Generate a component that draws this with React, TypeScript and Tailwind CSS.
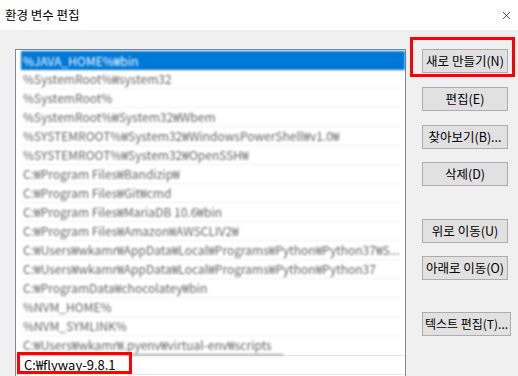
import { X } from "lucide-react";

const paths = [
  "%JAVA_HOME%₩bin",
  "%SystemRoot%₩system32",
  "%SystemRoot%",
  "%SystemRoot%₩System32₩Wbem",
  "%SYSTEMROOT%₩System32₩WindowsPowerShell₩v1.0₩",
  "%SYSTEMROOT%₩System32₩OpenSSH₩",
  "C:₩Program Files₩Bandizip₩",
  "C:₩Program Files₩Git₩cmd",
  "C:₩Program Files₩MariaDB 10.6₩bin",
  "C:₩Program Files₩Amazon₩AWSCLIV2₩",
  "C:₩Users₩wkamr₩AppData₩Local₩Programs₩Python₩Python37₩S...",
  "C:₩Users₩wkamr₩AppData₩Local₩Programs₩Python₩Python37",
  "C:₩ProgramData₩chocolatey₩bin",
  "%NVM_HOME%",
  "%NVM_SYMLINK%",
  "C:₩Users₩wkamr₩.pyenv₩virtual-env₩scripts",
];

const font = { fontFamily: '"Noto Sans CJK KR", "Noto Sans", sans-serif' };

const WinButton = ({ label, className = "" }: { label: string; className?: string }) => (
  <button
    className={`w-[86px] h-[24px] bg-[#e1e1e1] border border-[#adadad] text-[12.5px] text-black leading-none flex items-center justify-center whitespace-nowrap ${className}`}
  >
    {label}
  </button>
);

export default function App() {
  return (
    <div className="w-[518px] h-[376px] overflow-hidden flex flex-col bg-[#f0f0f0]" style={font}>
      {/* 제목 표시줄 */}
      <div className="h-[30px] bg-white flex items-center justify-between pl-[5px] pr-[5px] shrink-0">
        <span className="text-[12.5px] text-black">환경 변수 편집</span>
        <X className="w-[13px] h-[13px] text-black" strokeWidth={1.2} />
      </div>

      <div className="flex flex-1 pt-[19px] pl-[15px]">
        {/* 경로 목록 */}
        <div className="relative w-[391px] h-[340px] bg-white border border-[#828790] shrink-0 pl-[5px] pr-[4px] pt-[1px]">
          <div className="blur-[1px]">
            {paths.map((p, i) => (
              <div
                key={i}
                className={`h-[19px] flex items-center pl-[2px] text-[12px] whitespace-nowrap ${
                  i === 0
                    ? "bg-[#0078d7] text-white -mr-[4px]"
                    : "text-[#666] border-b border-[#f0f0f0]"
                } ${i === 15 ? "border-b border-dotted border-black w-[262px]" : ""}`}
              >
                {p}
              </div>
            ))}
          </div>
          <div className="h-[20px] -ml-[5px] -mr-[4px] border-y border-[#e6e6e6] flex items-center pl-[8px] text-[13px] text-black">
            C:₩flyway-9.8.1
          </div>
          <div className="absolute left-[1px] top-[302px] w-[115px] h-[22px] border-[3px] border-[#ff0000]" />
        </div>

        {/* 버튼 */}
        <div className="flex flex-col ml-[16px]">
          <div className="relative">
            <WinButton label="새로 만들기(N)" />
            <div className="absolute -left-[12px] -top-[12px] w-[105px] h-[40px] border-[3px] border-[#ff0000]" />
          </div>
          <WinButton label="편집(E)" className="mt-[14px]" />
          <WinButton label="찾아보기(B)..." className="mt-[14px]" />
          <WinButton label="삭제(D)" className="mt-[13px]" />
          <WinButton label="위로 이동(U)" className="mt-[33px]" />
          <WinButton label="아래로 이동(O)" className="mt-[13px]" />
          <WinButton label="텍스트 편집(T)..." className="mt-[32px] !w-[89px] !text-[12px]" />
        </div>
      </div>
    </div>
  );
}
